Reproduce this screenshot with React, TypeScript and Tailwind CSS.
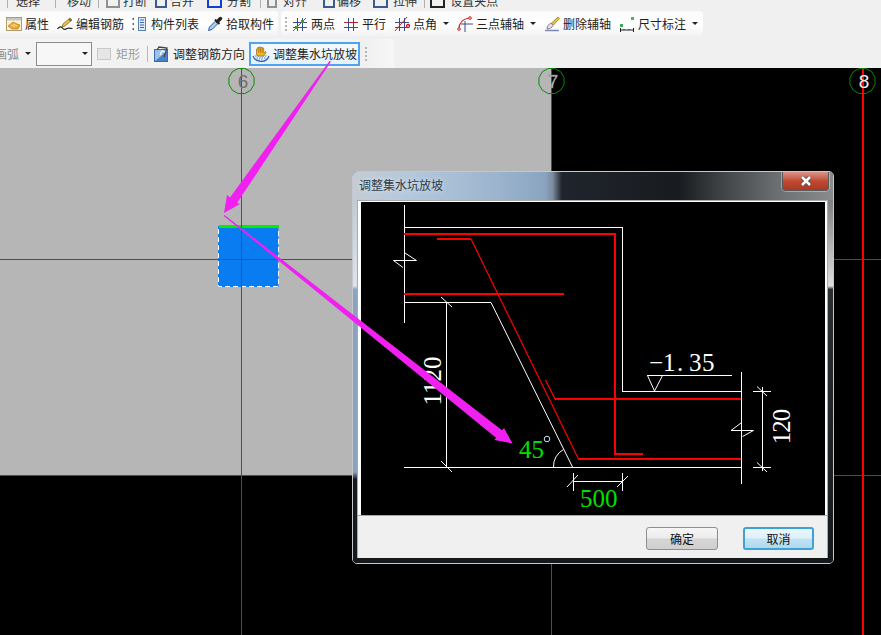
import React from "react";

const Ic = ({ children, w = 16 }: { children: React.ReactNode; w?: number }) => (
  <svg width={w} height={16} viewBox={`0 0 ${w} 16`} className="shrink-0" fill="none">{children}</svg>
);

const IconProp = () => (
  <Ic>
    <rect x="0.500" y="1.500" width="15" height="13" fill="#fff3d6" stroke="#b09a70" />
    <rect x="1" y="2" width="14" height="2.500" fill="#c8c8c0" />
    <path d="M2 10l5-4 4 2 3 1-2 4H6z" fill="#f0a830" stroke="#b87818" strokeWidth="0.700" />
    <path d="M5 9l4 2M7 8l4 2" stroke="#fff2c0" strokeWidth="0.800" />
  </Ic>
);
const IconEdit = () => (
  <Ic>
    <path d="M0.500 13c2-3 4-2.500 5-1s3 1.500 4.500 0.500 4 0 5.500 0" stroke="#222" strokeWidth="1.200" />
    <path d="M5 11l1-3 7-6 2 2-7 6z" fill="#e8c050" stroke="#8a6a20" strokeWidth="0.800" />
    <path d="M12 3l2 2" stroke="#555" strokeWidth="1.200" />
  </Ic>
);
const IconList = () => (
  <Ic>
    <path d="M0.500 3h3M0.500 8h3M0.500 13h3" stroke="#666" strokeWidth="2" strokeDasharray="1.500 1.500" />
    <rect x="6.500" y="1.500" width="7" height="13" fill="#dfeaf8" stroke="#5a80b0" />
    <path d="M8 4h4M8 6.500h4M8 9h4M8 11.500h4" stroke="#3a6aa8" />
  </Ic>
);
const IconPick = () => (
  <Ic>
    <path d="M1.500 14.500l1-3.500 6-6 2.500 2.500-6 6z" fill="#a8ccf0" stroke="#2a5ea8" />
    <path d="M8 3.500l4.500 4.500" stroke="#222" strokeWidth="2" />
    <path d="M10.500 5.500l3-3" stroke="#222" strokeWidth="3.500" strokeLinecap="round" />
  </Ic>
);
const Hash = ({ h = "#3a4a90", v = "#3a4a90" }: { h?: string; v?: string }) => (
  <>
    <path d="M1 6.500h14M1 11.500h14" stroke={h} />
    <path d="M5.500 2v13M10.500 2v13" stroke={v} />
  </>
);
const IconTwo = () => (
  <Ic>
    <Hash />
    <path d="M1 15L14 2" stroke="#d02020" />
    <rect x="9" y="4" width="3" height="3" fill="#3a9a30" />
    <rect x="3" y="10" width="3" height="3" fill="#3a9a30" />
  </Ic>
);
const IconPar = () => (
  <Ic>
    <Hash h="#c02020" v="#3a4a90" />
  </Ic>
);
const IconAngle = () => (
  <Ic>
    <Hash />
    <path d="M1 15L13 1" stroke="#d02020" />
    <circle cx="14" cy="10" r="1.500" stroke="#e01010" strokeWidth="1.300" />
  </Ic>
);
const IconArc = () => (
  <Ic>
    <path d="M2 13C2 7 6 3 12 2" stroke="#d02020" strokeWidth="1.200" />
    <path d="M8 5v11M4 8h12" stroke="#3a4a90" />
    <circle cx="2" cy="13" r="1.300" fill="#fff" stroke="#d02020" />
    <circle cx="13" cy="2" r="1.300" fill="#fff" stroke="#d02020" />
  </Ic>
);
const IconDel = () => (
  <Ic>
    <path d="M1 14.500h14" stroke="#7a8ab0" strokeWidth="1.500" />
    <path d="M3 13c0-3 2-5 4-6l2 2.500c-1 2-3 3.500-6 3.500z" fill="#e8e0f0" stroke="#706080" strokeWidth="0.800" />
    <path d="M7.500 7L14 1l1.500 1.500L9.500 9z" fill="#e8c040" stroke="#8a7020" strokeWidth="0.700" />
  </Ic>
);
const IconDim = () => (
  <Ic>
    <rect x="1" y="8" width="3" height="3" fill="#40a860" />
    <rect x="12" y="1" width="3" height="3" fill="#40b860" />
    <path d="M1.500 12v4M14.500 12v4M1.500 14h13" stroke="#222" />
    <path d="M5 14v-1M10 14v-1" stroke="#222" />
  </Ic>
);
const IconRect = () => (
  <Ic w={14}>
    <rect x="0.500" y="2.500" width="13" height="11" fill="#e6e6e6" stroke="#c8c8c8" />
  </Ic>
);
const IconDir = () => (
  <Ic>
    <rect x="1.500" y="3.500" width="13" height="12" fill="#9cc0e8" stroke="#3a6aa8" />
    <path d="M2 15L14 5v10z" fill="#4a80c8" />
    <path d="M4 4l2-3 8 1-3 9" stroke="#444" strokeWidth="1.300" />
    <path d="M7 9l2-4 3 1" stroke="#fff" strokeWidth="1.200" />
  </Ic>
);
const IconPit = () => (
  <Ic w={18}>
    <path d="M1 10c1 3 3 5 8 5.500 4 0 7-2.500 8-5.500" stroke="#2a5ab0" strokeWidth="1.200" />
    <path d="M3 10h12M4.500 12h9M6.500 14h5" stroke="#4a80d0" strokeDasharray="1.500 1" />
    <path d="M4.500 8.500V3h1.200v-1.500h1.500V1h1.500v.500h1.500V2h1.500v5l1.800-1.500.7.8-2.500 3.700H5.500z" fill="#f2b418" stroke="#9a6a10" strokeWidth="0.700" />
    <path d="M6.800 2.500v4M8.500 2v4.500M10.200 2.500v4" stroke="#9a6a10" strokeWidth="0.700" />
  </Ic>
);

const Caret = () => (
  <svg width="6" height="3" viewBox="0 0 6 3" className="shrink-0"><path d="M0 0h6L3 3z" fill="#222" /></svg>
);
const Grip = () => (
  <div className="flex flex-col gap-[2px] w-[2px] shrink-0">
    {[0, 1, 2, 3].map((i) => <div key={i} className="w-[2px] h-[2px] bg-[#b4b4b4]" />)}
  </div>
);
const Tool = ({ icon, label, caret }: { icon: React.ReactNode; label: string; caret?: boolean }) => (
  <div className="flex items-center shrink-0">
    {icon}
    <span className="ml-[3px]">{label}</span>
    {caret && <span className="ml-[6px] flex"><Caret /></span>}
  </div>
);

const Sep = ({ cls }: { cls: string }) => <div className={`w-px h-[12px] bg-[#b0b0b0] shrink-0 ${cls}`} />;
const TopLabel = ({ t, cls }: { t: string; cls: string }) => <span className={`shrink-0 ${cls}`}>{t}</span>;
const TopIcon = ({ cls, color }: { cls: string; color: string }) => (
  <div className={`h-[12px] shrink-0 border-2 ${cls}`} style={{ borderColor: color }} />
);

const Poly12 = ({ cx, cy, r = 13 }: { cx: number; cy: number; r?: number }) => {
  const pts = Array.from({ length: 12 }, (_, i) => {
    const a = (Math.PI * 2 * i) / 12 + Math.PI / 12;
    return `${cx + r * Math.cos(a)},${cy + r * Math.sin(a)}`;
  }).join(" ");
  return <polygon points={pts} fill="none" stroke="#078a07" />;
};

const W = "#ffffff";
const R = "#ff0000";
const white: [number, number, number, number][] = [
  [404.5, 205, 404.5, 323],
  [404, 227.5, 622.5, 227.5],
  [622.5, 227, 622.5, 391.5],
  [622, 391.5, 741, 391.5],
  [404, 302.5, 491, 302.5],
  [491, 302.5, 572.5, 467],
  [404, 467.5, 741, 467.5],
  [446.5, 302, 446.5, 467],
  [441, 297, 452, 307],
  [441, 461, 452, 472],
  [741.5, 372, 741.5, 484],
  [762.5, 387, 762.5, 471],
  [753, 391.5, 771, 391.5],
  [753, 467.5, 771, 467.5],
  [757, 386.5, 767, 396],
  [757, 462.5, 767, 472],
  [573.5, 473, 573.5, 491],
  [622.5, 473, 622.5, 491],
  [573, 481.5, 622, 481.5],
  [567, 487, 578, 475],
  [617, 487, 628, 476],
  [647, 375.5, 732, 375.5],
];

export default function App() {
  const cjk = "font-['Noto_Sans_CJK_SC','Liberation_Sans',sans-serif]";
  return (
    <div className={`relative w-[881px] h-[635px] overflow-hidden flex flex-col bg-[#f0f0f0] text-[12px] leading-[14px] text-[#222] ${cjk}`}>
      {/* clipped top toolbar */}
      <div className="h-[8px] shrink-0 overflow-hidden flex items-end text-[#333]">
        <Sep cls="ml-[7px]" />
        <TopLabel t="选择" cls="ml-[8px]" />
        <Sep cls="ml-[15px]" />
        <TopLabel t="移动" cls="ml-[11px]" />
        <Sep cls="ml-[7px]" />
        <TopIcon cls="ml-[7px] w-[14px]" color="#909090" />
        <TopLabel t="打断" cls="ml-[3px]" />
        <TopIcon cls="ml-[8px] w-[12px]" color="#3a5a90" />
        <TopLabel t="合并" cls="ml-[3px]" />
        <TopIcon cls="ml-[13px] w-[15px]" color="#1040d0" />
        <TopLabel t="分割" cls="ml-[5px]" />
        <Sep cls="ml-[9px]" />
        <TopIcon cls="ml-[6px] w-[10px]" color="#909090" />
        <TopLabel t="对齐" cls="ml-[6px]" />
        <TopIcon cls="ml-[16px] w-[12px]" color="#3a5a90" />
        <TopLabel t="偏移" cls="ml-[2px]" />
        <TopIcon cls="ml-[12px] w-[15px]" color="#3a5a90" />
        <TopLabel t="拉伸" cls="ml-[5px]" />
        <Sep cls="ml-[7px]" />
        <TopIcon cls="ml-[5px] w-[15px]" color="#222" />
        <TopLabel t="设置夹点" cls="ml-[5px]" />
      </div>

      {/* row 2 */}
      <div className="mt-[3px] h-[25px] shrink-0 flex">
        <div className="w-[278px] flex items-center gap-2 pl-[6px] rounded-r-[3px] bg-linear-to-b from-[#fbfbfb] via-[#ffffff] to-[#f3f3f3]">
          <Tool icon={<IconProp />} label="属性" />
          <Tool icon={<IconEdit />} label="编辑钢筋" />
          <Tool icon={<IconList />} label="构件列表" />
          <Tool icon={<IconPick />} label="拾取构件" />
        </div>
        <div className="ml-[3px] w-[422px] flex items-center gap-2 rounded-[3px] bg-linear-to-b from-[#fbfbfb] via-[#ffffff] to-[#f3f3f3]">
          <div className="ml-[4px] mr-[-1px]"><Grip /></div>
          <div className="ml-[-2px] flex items-center gap-2">
            <Tool icon={<IconTwo />} label="两点" />
            <Tool icon={<IconPar />} label="平行" />
            <Tool icon={<IconAngle />} label="点角" caret />
            <Tool icon={<IconArc />} label="三点辅轴" caret />
            <Tool icon={<IconDel />} label="删除辅轴" />
            <Tool icon={<IconDim />} label="尺寸标注" caret />
          </div>
        </div>
      </div>

      {/* row 3 */}
      <div className="mt-[3px] h-[29px] shrink-0 flex">
        <div className="w-[360px] flex items-center rounded-r-[3px] bg-linear-to-b from-[#f4f4f4] to-[#f1f1f1] overflow-hidden">
          <span className="ml-[-5px] text-[#8a8a8a]">画弧</span>
          <span className="ml-[6px] flex"><Caret /></span>
          <div className="ml-[5px] w-[56px] h-[24px] border border-[#8c8c8c] bg-[#f7f7f7] flex items-center justify-end pr-[3px] shrink-0">
            <Caret />
          </div>
          <span className="ml-[5px] flex"><IconRect /></span>
          <span className="ml-[5px] text-[#9a9a9a]">矩形</span>
          <div className="ml-[7px] w-px h-[16px] bg-[#b8b8b8] shrink-0" />
          <span className="ml-[5px] flex"><IconDir /></span>
          <span className="ml-[4px]">调整钢筋方向</span>
          <div className="ml-[4px] w-[111px] h-[24px] shrink-0 flex items-center border-2 border-[#52a2f2] bg-linear-to-b from-[#f4f9fe] to-[#e6f1fb] pl-[1px]">
            <IconPit />
            <span className="ml-[3px] whitespace-nowrap">调整集水坑放坡</span>
          </div>
        </div>
        <div className="ml-[3px] w-[31px] flex items-center pl-[2px] gap-[3px] rounded-[2px] bg-linear-to-r from-[#f0f0f0] to-[#f7f7f7]">
          <Grip />
        </div>
      </div>

      {/* canvas */}
      <div className="relative flex-1 bg-black">
        <svg width="881" height="567" viewBox="0 68 881 567" className="block">
          <rect x="0" y="68" width="551" height="407" fill="#b6b6b6" />
          <rect x="218" y="226" width="60.500" height="61" fill="#0a7cf2" />
          <path d="M218.500 229V286.500H278.500V229" fill="none" stroke="#fff" strokeDasharray="5 3" />
          <rect x="219" y="225" width="60" height="3" fill="#00ee00" />
          <rect x="0" y="259" width="881" height="1" fill="#e01010" />
          <rect x="0" y="475" width="881" height="1" fill="#e01010" />
          <rect x="241" y="68" width="1" height="567" fill="#e01010" />
          <rect x="551" y="68" width="1" height="567" fill="#e01010" />
          <rect x="862" y="68" width="2" height="567" fill={R} />
          <Poly12 cx={241.5} cy={81} />
          <Poly12 cx={551.5} cy={81} />
          <Poly12 cx={862.5} cy={81} />
          <text x="243" y="88" textAnchor="middle" fontSize="19" fontFamily="Liberation Sans" fill="#707070">6</text>
          <text x="553" y="88" textAnchor="middle" fontSize="19" fontFamily="Liberation Sans" fill="#c4c4c4" stroke="#666" strokeWidth="0.300">7</text>
          <text x="864" y="88" textAnchor="middle" fontSize="19" fontFamily="Liberation Sans" fill="#f0f0f0">8</text>
        </svg>
      </div>

      {/* dialog */}
      <div className="absolute left-[352px] top-[171px] w-[482px] h-[393px] flex flex-col rounded-[5px] border border-[#c4c8cc] overflow-hidden bg-[#16191c]">
        <div className="h-[28px] shrink-0 flex justify-between pl-[6px] pr-[4px] bg-[linear-gradient(90deg,#c4ccd4_0%,#b4c8dc_12%,#9cb4ce_30%,#8aa4c0_40%,#7c8c9e_41.600%,#20242c_43.500%,#181c20_68%,#3c4042_76%,#6a6e70_88%,#8a8c8c_100%)]">
          <span className="mt-[6px] text-[#2c3a46] [text-shadow:0_0_5px_rgba(255,255,255,0.7)]">调整集水坑放坡</span>
          <div className="w-[47px] h-[19px] rounded-b-[4px] border border-t-0 border-[#5a5a5a] flex items-center justify-center bg-linear-to-b from-[#d8948a] via-[#c04a30] to-[#a83a26] shadow-[0_0_0_1px_rgba(255,255,255,0.35)]">
            <svg width="12" height="10" viewBox="0 0 12 10"><path d="M2 1l8 8M10 1L2 9" stroke="#444" strokeWidth="4" /><path d="M2 1l8 8M10 1L2 9" stroke="#fff" strokeWidth="2.600" /></svg>
          </div>
        </div>
        <div className="flex-1 flex min-h-0">
          <div className="w-[4px] shrink-0 bg-[linear-gradient(180deg,#c0ccd8_0%,#dde3ea_24%,#8aa4c0_25%,#8aa4c0_76%,#16191c_78%)]" />
          <div className="w-[471px] shrink-0 flex flex-col border border-[#a8acb0] bg-white">
            <div className="flex-1 pl-[3px] pt-[1px] pr-[2px]">
              <svg width="464" height="313" viewBox="361 202 464 313" className="block bg-black">
                {white.map(([a, b, c, d], i) => (
                  <line key={i} x1={a} y1={b} x2={c} y2={d} stroke={W} />
                ))}
                <polyline points="405,253 416.500,260.500 393.500,260.500 403,267.500" fill="none" stroke={W} />
                <polyline points="741,423 731,430.500 753.500,430.500 742.500,436.500" fill="none" stroke={W} />
                <polyline points="647.500,375.500 654.500,391 662.500,375.500" fill="none" stroke={W} />
                <path d="M553.500 467A19 19 0 0 1 563.500 449.500" fill="none" stroke={W} />
                <polyline points="404,234 615,234 615,454 643,454" fill="none" stroke={R} strokeWidth="2" />
                <line x1="437" y1="239" x2="471" y2="239" stroke={R} strokeWidth="2" />
                <line x1="471" y1="239" x2="578.500" y2="459" stroke={R} strokeWidth="1.200" />
                <line x1="578" y1="459" x2="741" y2="459" stroke={R} strokeWidth="2" />
                <line x1="404" y1="294" x2="564" y2="294" stroke={R} strokeWidth="2" />
                <line x1="545.500" y1="380" x2="555" y2="399" stroke={R} strokeWidth="1.200" />
                <line x1="555" y1="399" x2="741" y2="399" stroke={R} strokeWidth="2" />
                <g fontFamily="Liberation Serif" fontSize="25">
                  <text x="441" y="381" textAnchor="middle" fill={W} transform="rotate(-90 441 381)">1120</text>
                  <text x="790" y="427" textAnchor="middle" fill={W} letterSpacing="-1" transform="rotate(-90 790 427)">120</text>
                  <text x="649 663 677 689 702" y="371" fill={W} fontSize="25">−1.35</text>
                  <text x="519" y="458" fill="#00e000">45</text>
                  <text x="580" y="507" fill="#00e000">500</text>
                </g>
                <circle cx="547" cy="439" r="2.800" fill="none" stroke="#cfe4ff" />
              </svg>
            </div>
            <div className="h-[43px] shrink-0 border-t border-[#a8a8a8] bg-[#f0f0f0] flex justify-end gap-[25px] pt-[11px] pr-[13px]">
              <button className="w-[72px] h-[23px] rounded-[3px] border border-[#8e8e8e] bg-[linear-gradient(180deg,#f6f6f6_0%,#ebebeb_48%,#d6d6d6_52%,#cfcfcf_100%)] text-[12px] text-[#111]">确定</button>
              <button className="w-[71px] h-[23px] rounded-[3px] border-2 border-[#3fa2d4] bg-[linear-gradient(180deg,#ecf7fd_0%,#dcf0fb_48%,#c2e3f5_52%,#aed8ef_100%)] text-[12px] text-[#111]">取消</button>
            </div>
          </div>
          <div className="flex-1 bg-[linear-gradient(180deg,#7e8080_0%,#dfdfdf_24%,#2a2e30_25%,#16191c_100%)]" />
        </div>
        <div className="h-[5px] shrink-0 bg-[#16191c]" />
      </div>

      {/* annotation arrows */}
      <svg width="881" height="635" viewBox="0 0 881 635" className="absolute left-0 top-0 pointer-events-none">
        <polygon points="224,213 227,195 230,197.500 329.500,61 331,61.500 237,203 240,204" fill="#f020f0" />
        <polygon points="223.500,215.800 224.500,215 502,430.200 504,428 512.500,443.500 494.500,440 496,437.800" fill="#f020f0" />
      </svg>
    </div>
  );
}
